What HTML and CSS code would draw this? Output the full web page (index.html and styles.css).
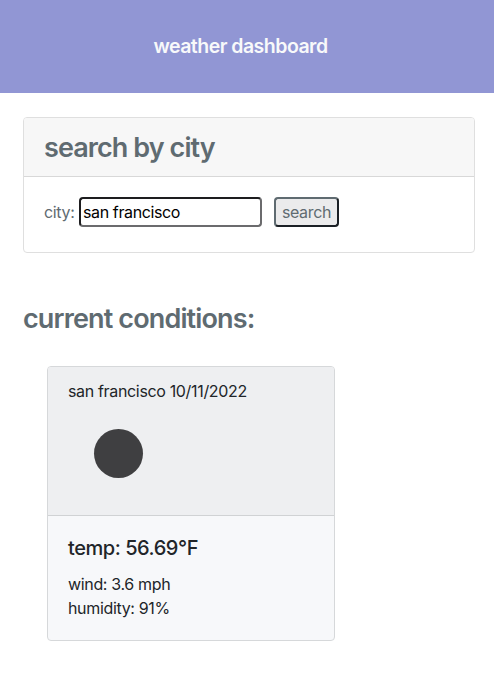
FILE: index.html
```html
<!DOCTYPE html>
<html lang="en">
<head>
<meta charset="utf-8">
<title>weather dashboard</title>
<link rel="stylesheet" href="styles.css">
</head>
<body>
<header class="banner"><h1>weather dashboard</h1></header>
<main>
<section class="card search-card">
<h2 class="card-header"><span>search by city</span></h2>
<form class="search-form">
<label for="city"><span>city:</span></label>
<input id="city" type="text" value="san francisco">
<button type="button"><span>search</span></button>
</form>
</section>
<h2 class="section-title"><span>current conditions:</span></h2>
<article class="card weather-card">
<div class="weather-top">
<p><span class="place">san francisco 10/11/2022</span></p>
<svg class="icon" width="100" height="100" viewBox="0 0 100 100"><circle cx="50.5" cy="50.5" r="24.5" fill="#3f3f41"/></svg>
</div>
<div class="weather-body">
<h3><span>temp: 56.69°F</span></h3>
<p><span class="wind">wind: 3.6 mph</span></p>
<p><span class="humidity">humidity: 91%</span></p>
</div>
</article>
</main>
</body>
</html>
```
FILE: styles.css
```css
* { box-sizing: border-box; }
body { margin: 0; background: #fff; color: #212529; font: 16px/24px Inter, sans-serif; letter-spacing: -0.34px; }
h1, h2, h3, p { margin: 0; font-weight: 600; }
p { font-weight: 400; }
.banner { height: 93px; padding: 0 13px 2px 0; display: flex; align-items: center; justify-content: center; background: #9196d4; color: #f8f9fa; }
.banner h1 { font-size: 19.5px; line-height: 24px; letter-spacing: -0.52px; }
main { padding: 24px 19px 0 23px; }
.card { border: 1px solid #dfdfdf; border-radius: 4px; overflow: hidden; }
.search-card { height: 136px; color: #5f6b71; }
.card-header { height: 59px; padding: 13px 20px 11px; background: #f7f7f7; border-bottom: 1px solid #d8d8d8; font-size: 27px; line-height: 34px; letter-spacing: -0.92px; }
.search-form { display: flex; padding: 20px; align-items: center; height: 70px; }
.search-form label { width: 31px; }
.search-form input { width: 183px; height: 30px; margin-left: 4px; padding: 1px 2px; border: 2px solid; border-color: #1d1d1f #6b6b6d #6b6b6d #1d1d1f; border-radius: 4px; font: inherit; letter-spacing: -0.38px; color: #000; }
.search-form button { width: 65px; height: 30px; margin-left: 12px; padding: 0; border: 2px solid; border-color: #5f6b71 #1b2025 #1b2025 #5f6b71; border-radius: 4px; background: #ebebec; color: #5f6b71; font: inherit; letter-spacing: inherit; }
.section-title { margin-top: 49px; font-size: 27px; line-height: 34px; letter-spacing: -0.86px; color: #5f6b71; }
.weather-card { width: 288px; height: 275px; margin: 30px 0 0 24px; border-color: #d6d8da; background: #f7f8fa; }
.weather-top { height: 149px; padding: 12px 20px; background: #eeeff1; border-bottom: 1px solid #d0d2d4; }
.icon { display: block; }
.weather-body { padding: 20px; }
.weather-body h3 { font-size: 20px; line-height: 24px; margin-bottom: 12px; font-weight: 500; letter-spacing: -0.45px; }
```
